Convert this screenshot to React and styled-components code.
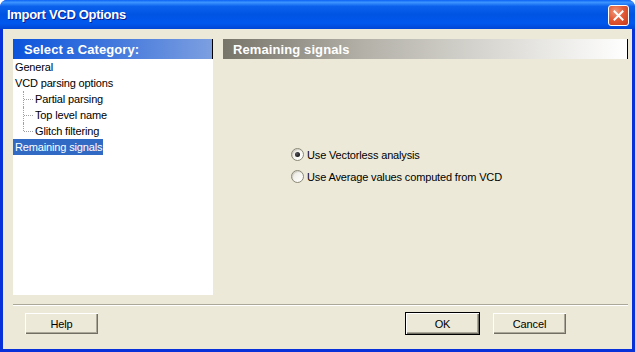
import styled, { createGlobalStyle } from "styled-components";

const GlobalStyle = createGlobalStyle`
  html, body {
    margin: 0;
    padding: 0;
    background: #ffffff;
  }
  body {
    font-family: "Liberation Sans", Arial, sans-serif;
    font-size: 11px;
    letter-spacing: -0.15px;
    color: #000000;
  }
`;

const categories = [
  { label: "General", level: 0 },
  { label: "VCD parsing options", level: 0 },
  { label: "Partial parsing", level: 1 },
  { label: "Top level name", level: 1 },
  { label: "Glitch filtering", level: 1, last: true },
  { label: "Remaining signals", level: 0, selected: true },
];

const options = [
  { label: "Use Vectorless analysis", checked: true },
  { label: "Use Average values computed from VCD", checked: false },
];

const Window = styled.div`
  width: 635px;
  height: 352px;
  display: flex;
  flex-direction: column;
  background: #0831d9;
  border-radius: 7px 7px 0 0;
  overflow: hidden;
`;

const TitleBar = styled.div`
  height: 29px;
  flex: none;
  display: flex;
  align-items: center;
  justify-content: space-between;
  padding: 0 6px 0 7px;
  background: linear-gradient(
    to bottom,
    #0a62f5 0%,
    #3d95ff 8%,
    #0b61ec 22%,
    #0054e3 50%,
    #0058ee 80%,
    #0046d5 100%
  );
`;

const Title = styled.span`
  color: #ffffff;
  font-weight: bold;
  font-size: 13px;
  letter-spacing: -0.3px;
  text-shadow: 1px 1px 0 #0a1f8f;
`;

const CloseButton = styled.div`
  width: 19px;
  height: 19px;
  border: 1px solid #ffffff;
  border-radius: 3px;
  background: radial-gradient(circle at 35% 30%, #f09a7c 0%, #e35a36 45%, #c6391a 100%);
  display: flex;
  align-items: center;
  justify-content: center;
  margin-top: 2px;
`;

const Body = styled.div`
  flex: 1;
  display: flex;
  flex-direction: column;
  background: #ece9d8;
  margin: 0 3px 3px 3px;
  padding: 10px 4px 14px 10px;
`;

const Main = styled.div`
  display: flex;
  gap: 10px;
  height: 256px;
`;

const CategoryPanel = styled.div`
  width: 200px;
  display: flex;
  flex-direction: column;
  background: #ffffff;
`;

const PanelHeader = styled.div`
  height: 20px;
  flex: none;
  display: flex;
  align-items: center;
  padding-left: ${(p) => p.$indent}px;
  color: #ffffff;
  font-weight: bold;
  font-size: 13px;
  letter-spacing: 0.1px;
  border-right: 1px solid #000000;
  background: ${(p) =>
    p.$tone === "blue"
      ? "linear-gradient(to right, #0a54dc 0%, #3d74dc 45%, #7c9fe0 100%)"
      : "linear-gradient(to right, #77746a 0%, #b3b1a8 35%, #dddcd7 70%, #ffffff 100%)"};
`;

const TreeList = styled.ul`
  list-style: none;
  margin: 0;
  padding: 0;
`;

const TreeItem = styled.li`
  height: 16px;
  display: flex;
  align-items: center;
  position: relative;
  padding-left: ${(p) => (p.$level ? 22 : 2)}px;
`;

const ItemLabel = styled.span`
  line-height: 16px;
  padding-right: 1px;
  margin-left: ${(p) => (p.$selected ? -2 : 0)}px;
  padding-left: ${(p) => (p.$selected ? 2 : 0)}px;
  background: ${(p) => (p.$selected ? "#316ac5" : "transparent")};
  color: ${(p) => (p.$selected ? "#ffffff" : "#000000")};
`;

const TreeBranch = styled.span`
  position: absolute;
  left: 10px;
  top: 0;
  width: 9px;
  height: ${(p) => (p.$last ? 8 : 16)}px;
  border-left: 1px dotted #a0a0a0;
  &::after {
    content: "";
    position: absolute;
    left: 0;
    top: 8px;
    width: 9px;
    border-top: 1px dotted #a0a0a0;
  }
`;

const OptionsPanel = styled.div`
  flex: 1;
  display: flex;
  flex-direction: column;
`;

const OptionGroup = styled.div`
  display: flex;
  flex-direction: column;
  gap: 9px;
  padding: 89px 0 0 68px;
`;

const OptionRow = styled.label`
  display: flex;
  align-items: center;
  gap: 3px;
  height: 13px;
`;

const Radio = styled.span`
  width: 11px;
  height: 11px;
  border-radius: 50%;
  border: 1px solid #8a8877;
  box-shadow: inset 1px 1px 0 #d4d0c8;
  background: linear-gradient(135deg, #e4e2d8 0%, #f6f5f0 50%, #ffffff 100%);
  display: flex;
  align-items: center;
  justify-content: center;
  &::after {
    content: "";
    width: 5px;
    height: 5px;
    border-radius: 50%;
    background: ${(p) =>
      p.$checked ? "radial-gradient(circle at 35% 35%, #55555f 0%, #101010 80%)" : "transparent"};
  }
`;

const Separator = styled.div`
  height: 1px;
  margin: 9px 0 0 0;
  background: #aca899;
  border-bottom: 1px solid #ffffff;
`;

const ButtonRow = styled.div`
  display: flex;
  align-items: center;
  margin-top: 6px;
  padding: 0 61px 0 11px;
`;

const Spacer = styled.div`
  flex: 1;
`;

const Button = styled.button`
  width: 75px;
  height: 23px;
  margin-left: ${(p) => p.$gap || 0}px;
  font-family: "Liberation Sans", Arial, sans-serif;
  font-size: 11px;
  letter-spacing: -0.15px;
  color: #000000;
  background: #ece9d8;
  padding: 0;
  border: 1px solid ${(p) => (p.$default ? "#000000" : "#ece9d8")};
  box-shadow: inset 1px 1px 0 #ffffff, inset -1px -1px 0 #716f64,
    inset -2px -2px 0 #aca899;
`;

function CloseIcon() {
  return (
    <svg width="11" height="11" viewBox="0 0 11 11">
      <path d="M1.5 1.5 L9.5 9.5 M9.5 1.5 L1.5 9.5" stroke="#ffffff" strokeWidth="2" strokeLinecap="square" />
    </svg>
  );
}

export default function App() {
  return (
    <>
      <GlobalStyle />
      <Window>
        <TitleBar>
          <Title>Import VCD Options</Title>
          <CloseButton>
            <CloseIcon />
          </CloseButton>
        </TitleBar>
        <Body>
          <Main>
            <CategoryPanel>
              <PanelHeader $tone="blue" $indent={11}>
                Select a Category:
              </PanelHeader>
              <TreeList>
                {categories.map((c) => (
                  <TreeItem key={c.label} $level={c.level}>
                    {c.level > 0 && <TreeBranch $last={c.last} />}
                    <ItemLabel $selected={c.selected}>{c.label}</ItemLabel>
                  </TreeItem>
                ))}
              </TreeList>
            </CategoryPanel>
            <OptionsPanel>
              <PanelHeader $tone="gray" $indent={10}>
                Remaining signals
              </PanelHeader>
              <OptionGroup>
                {options.map((o) => (
                  <OptionRow key={o.label}>
                    <Radio $checked={o.checked} />
                    {o.label}
                  </OptionRow>
                ))}
              </OptionGroup>
            </OptionsPanel>
          </Main>
          <Separator />
          <ButtonRow>
            <Button>Help</Button>
            <Spacer />
            <Button $default>OK</Button>
            <Button $gap={12}>Cancel</Button>
          </ButtonRow>
        </Body>
      </Window>
    </>
  );
}
